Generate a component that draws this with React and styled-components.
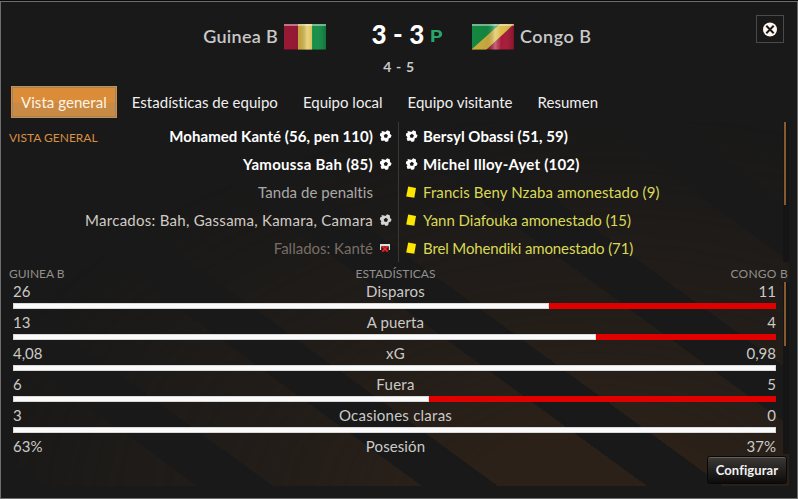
import React, { useState } from "react";
import styled, { createGlobalStyle } from "styled-components";

const GlobalStyle = createGlobalStyle`
  * {
    box-sizing: border-box;
  }

  body {
    margin: 0;
    background-color: #0b0a0b;
    font-family: Lato, "Liberation Sans", sans-serif;
  }
`;

const Window = styled.div`
  display: flex;
  flex-direction: column;
  width: 798px;
  height: 498px;
  margin-top: 1px;
  border: 1px solid #6d6d6d;
  background-color: #191919;
  overflow: hidden;
`;

const Header = styled.header`
  display: grid;
  grid-template-columns: 325px 146px 1fr 41px;
  height: 84px;
`;

const Team = styled.div`
  display: flex;
  align-items: center;
  justify-content: ${({ $home }) => ($home ? "flex-end" : "flex-start")};
  gap: 6px;
  height: 69px;
`;

const TeamName = styled.span`
  padding-bottom: 2px;
  font-size: 18px;
  font-weight: 600;
  color: #c9c9c9;
  letter-spacing: ${({ $track }) => $track}px;
  white-space: nowrap;
`;

const Flag = styled.svg`
  display: block;
  width: 42px;
  height: 26px;
`;

const ScoreWrap = styled.div`
  display: flex;
  flex-direction: column;
`;

const ScoreLine = styled.div`
  display: grid;
  grid-template-columns: 1fr auto 1fr;
  align-items: center;
  height: 54px;
  padding: 11px 2px 2px 0;
`;

const Score = styled.span`
  grid-column: 2;
  font-size: 26px;
  font-weight: 900;
  color: #fff;
  letter-spacing: 0.2px;
  white-space: nowrap;
`;

const Penalties = styled.span`
  margin-left: 5px;
  padding-top: 4px;
  font-family: Inter, sans-serif;
  font-size: 16px;
  font-weight: 700;
  color: #25a867;
  transform: scaleX(1.25);
  transform-origin: left;
`;

const SubScore = styled.span`
  margin-top: 2px;
  font-size: 14px;
  font-weight: 700;
  line-height: 18px;
  letter-spacing: 0.6px;
  color: #c9c9c9;
  text-align: center;
`;

const CloseButton = styled.button`
  display: flex;
  align-items: center;
  justify-content: center;
  width: 28px;
  height: 28px;
  margin-top: 13px;
  padding: 0;
  border: 1px solid #4a4a4a;
  background-color: transparent;
  cursor: pointer;
`;

const Tabs = styled.nav`
  display: flex;
  gap: 5px;
  height: 36px;
  padding-left: 10px;
`;

const Tab = styled.button`
  height: 32px;
  padding: 0 10px 1px;
  border: none;
  background: transparent;
  color: #efefef;
  font-family: inherit;
  font-size: 15px;
  letter-spacing: ${({ $track }) => $track}px;
  white-space: nowrap;
  cursor: pointer;

  &.active {
    background: linear-gradient(#da8c38 0 53%, #c98a45 53%);
    box-shadow: inset 0 0 0 1px #d68d3d, inset 0 0 0 2px #94866f;
    color: #fff3e4;
  }
`;

const Body = styled.main`
  position: relative;
  display: flex;
  flex-direction: column;
  width: 780px;
  height: 364px;
  margin-left: 8px;

  &::before {
    content: "";
    position: absolute;
    inset: 0;
    background: repeating-linear-gradient(
      36.1deg,
      transparent 0 22.9px,
      #2b2119 22.9px 110.7px,
      transparent 110.7px 132.6px
    );
    mask-image: radial-gradient(640px 390px at 75% 105%, #000 20%, rgba(0, 0, 0, 0.5) 55%, transparent);
  }

  > * {
    position: relative;
  }
`;

const Events = styled.section`
  display: grid;
  grid-template-columns: 110px 279px 1fr 6px;
  height: 140px;
`;

const SectionTitle = styled.h2`
  margin: 0;
  font-size: 12px;
  font-weight: 400;
  line-height: 32px;
  color: #d98f45;
  white-space: nowrap;
`;

const EventList = styled.div`
  display: flex;
  flex-direction: column;
  align-items: ${({ $home }) => ($home ? "flex-end" : "flex-start")};
  border-left: ${({ $home }) => ($home ? "none" : "1px solid #383838")};
`;

const EventRow = styled.div`
  display: flex;
  flex-direction: ${({ $home }) => ($home ? "row" : "row-reverse")};
  align-items: center;
  gap: ${({ $home }) => ($home ? 6 : 5)}px;
  height: 28px;
  padding: 0 6px;
`;

const eventColors = {
  goal: "#ffffff",
  title: "#aaa9a7",
  scored: "#d2cbc4",
  missed: "#776e67",
  card: "#d9d955",
};

const EventText = styled.span`
  padding-bottom: 1px;
  font-size: 15px;
  font-weight: ${({ $kind }) => ($kind === "goal" ? 700 : 400)};
  color: ${({ $kind }) => eventColors[$kind]};
  letter-spacing: ${({ $track }) => $track}px;
  white-space: nowrap;
`;

const EventIcon = styled.svg`
  display: block;
  flex: none;
  width: 13px;
  height: 14px;
`;

const ScrollTrack = styled.div`
  width: 6px;
  height: ${({ $height }) => $height}px;
  padding-left: 1px;
  background-color: #151515;
`;

const ScrollThumb = styled.div`
  width: 2px;
  height: ${({ $height }) => $height}px;
  background-color: #87592f;
`;

const StatsHeader = styled.div`
  display: grid;
  grid-template-columns: 1fr auto 1fr;
  align-items: center;
  height: 20px;
  padding: 3px 1px 1px 0;
  font-size: 12px;
  color: #92908b;

  span:last-child {
    letter-spacing: 0.25px;
    text-align: right;
  }
`;

const StatsTitle = styled.span`
  padding-right: 6px;
`;

const Stats = styled.section`
  display: grid;
  grid-template-columns: 1fr 6px;
  column-gap: 7px;
  padding-left: 4px;
`;

const StatRow = styled.div`
  height: 31px;
`;

const StatLine = styled.div`
  display: grid;
  grid-template-columns: 1fr auto 1fr;
  align-items: center;
  height: 21px;
  padding-bottom: 3px;
  font-size: 15px;
  color: #cbcac7;
`;

const StatLabel = styled.span`
  padding-left: 2px;
  letter-spacing: ${({ $track }) => $track}px;
`;

const StatValue = styled.span`
  text-align: ${({ $away }) => ($away ? "right" : "left")};
`;

const Bar = styled.div`
  display: flex;
  height: 6px;
  background-color: #e00000;
`;

const BarFill = styled.div`
  border: 1px solid #d9d9d9;
  background-color: #fafafa;
`;

const ConfigButton = styled.button`
  align-self: flex-end;
  width: 80px;
  height: 28px;
  margin: -12px 2px 0 0;
  padding: 0;
  border: 1px solid #080808;
  border-radius: 3px;
  background: linear-gradient(#3c3835, #211f1e 55%, #0d0c0c);
  box-shadow: inset 0 1px 0 #65615e;
  color: #f2f2f2;
  font-family: inherit;
  font-size: 13px;
  font-weight: 700;
  letter-spacing: 0.1px;
  cursor: pointer;
`;

const tabs = [
  { name: "Vista general", track: 0.05 },
  { name: "Estadísticas de equipo", track: 0.02 },
  { name: "Equipo local", track: 0 },
  { name: "Equipo visitante", track: 0 },
  { name: "Resumen", track: 0.05 },
];

const homeEvents = [
  { text: "Mohamed Kanté (56, pen 110)", kind: "goal", track: 0.05 },
  { text: "Yamoussa Bah (85)", kind: "goal", track: 0.3 },
  { text: "Tanda de penaltis", kind: "title", track: 0.06 },
  { text: "Marcados: Bah, Gassama, Kamara, Camara", kind: "scored", track: 0.27 },
  { text: "Fallados: Kanté", kind: "missed", track: 0 },
];

const awayEvents = [
  { text: "Bersyl Obassi (51, 59)", kind: "goal", track: 0.04 },
  { text: "Michel Illoy-Ayet (102)", kind: "goal", track: 0.22 },
  { text: "Francis Beny Nzaba amonestado (9)", kind: "card", track: 0.09 },
  { text: "Yann Diafouka amonestado (15)", kind: "card", track: -0.03 },
  { text: "Brel Mohendiki amonestado (71)", kind: "card", track: -0.13 },
];

const stats = [
  { label: "Disparos", home: "26", away: "11", share: 70.27, track: 0.2 },
  { label: "A puerta", home: "13", away: "4", share: 76.47, track: 0.1 },
  { label: "xG", home: "4,08", away: "0,98", share: 100, track: 0.3 },
  { label: "Fuera", home: "6", away: "5", share: 54.55, track: 0.3 },
  { label: "Ocasiones claras", home: "3", away: "0", share: 100, track: 0.25 },
  { label: "Posesión", home: "63%", away: "37%", track: 0.1 },
];

function FlagShine({ id }) {
  return (
    <>
      <defs>
        <linearGradient id={id}>
          <stop offset="0" stopColor="#000" stopOpacity="0.08" />
          <stop offset="0.35" stopColor="#000" stopOpacity="0.12" />
          <stop offset="0.55" stopColor="#fff" stopOpacity="0.35" />
          <stop offset="0.7" stopColor="#fff" stopOpacity="0.02" />
          <stop offset="1" stopColor="#000" stopOpacity="0.18" />
        </linearGradient>
      </defs>
      <rect width="42" height="26" fill={`url(#${id})`} />
      <path d="M0 1H42" stroke="#fff" strokeOpacity="0.4" strokeWidth="2" />
      <path d="M0 25.5H42" stroke="#000" strokeOpacity="0.35" />
    </>
  );
}

function GuineaFlag() {
  return (
    <Flag viewBox="0 0 42 26">
      <rect width="14" height="26" fill="#a51c3a" />
      <rect x="14" width="14" height="26" fill="#dcbc45" />
      <rect x="28" width="14" height="26" fill="#128d45" />
      <FlagShine id="guineaShine" />
    </Flag>
  );
}

function CongoFlag() {
  return (
    <Flag viewBox="0 0 42 26">
      <rect width="42" height="26" fill="#dcbc45" />
      <path d="M0 0H28L0 25Z" fill="#159447" />
      <path d="M42 0V26H14Z" fill="#a51533" />
      <FlagShine id="congoShine" />
    </Flag>
  );
}

function BallIcon({ color }) {
  return (
    <EventIcon viewBox="0 0 13 14">
      <path
        d="M2.6 2 5 2.4 6.4 3 8.2 1.3 11 2.6 10.9 4.8 12.6 6.4 11.6 8.8 9.8 9.2 9.2 12.2 6.8 12.9 5.4 11.4 2.6 12 1.6 9.6 2.5 8.2 0.9 6.6 1.2 4.2 2.7 4Z"
        fill={color}
      />
      <path d="M6.8 4.8 8.9 6.2 8.1 8.7 5.5 8.7 4.7 6.4Z" fill="#191919" />
    </EventIcon>
  );
}

function CardIcon() {
  return (
    <EventIcon viewBox="0 0 13 14">
      <path d="M3.2 1.6 11 2.9 9.3 12.8 1.2 11.4Z" fill="#ffe600" />
    </EventIcon>
  );
}

function MissIcon() {
  return (
    <EventIcon viewBox="0 0 13 14">
      <path d="M1 9V3H11V9H9.6V5.5H2.4V9Z" fill="#e2dfdc" />
      <path d="M2.4 5.5H9.6V9L8 11H4L2.4 9Z" fill="#5c0a0d" />
      <path d="M3.4 5.4 8.8 10.6M8.6 5.4 3.2 10.6" stroke="#e0282d" strokeWidth="1.6" />
    </EventIcon>
  );
}

function KindIcon({ kind }) {
  if (kind === "goal") return <BallIcon color="#ffffff" />;
  if (kind === "scored") return <BallIcon color="#d4d4d4" />;
  if (kind === "missed") return <MissIcon />;
  if (kind === "card") return <CardIcon />;
  return <EventIcon viewBox="0 0 13 14" />;
}

function EventColumn({ events, home }) {
  return (
    <EventList $home={home}>
      {events.map(({ text, kind, track }) => (
        <EventRow key={text} $home={home}>
          <EventText $kind={kind} $track={track}>
            {text}
          </EventText>
          <KindIcon kind={kind} />
        </EventRow>
      ))}
    </EventList>
  );
}

function App() {
  const [activeTab, setActiveTab] = useState("Vista general");

  return (
    <>
      <GlobalStyle />
      <Window>
        <Header>
          <Team $home>
            <TeamName $track={0.3}>Guinea B</TeamName>
            <GuineaFlag />
          </Team>
          <ScoreWrap>
            <ScoreLine>
              <Score>3 - 3</Score>
              <Penalties>P</Penalties>
            </ScoreLine>
            <SubScore>4 - 5</SubScore>
          </ScoreWrap>
          <Team>
            <CongoFlag />
            <TeamName $track={0.5}>Congo B</TeamName>
          </Team>
          <CloseButton aria-label="Cerrar">
            <svg width="16" height="16" viewBox="0 0 16 16">
              <circle cx="8" cy="8.5" r="7" fill="#fff7f0" />
              <path d="M4.3 4.8 11.7 12.2M11.7 4.8 4.3 12.2" stroke="#191919" strokeWidth="2" />
            </svg>
          </CloseButton>
        </Header>
        <Tabs>
          {tabs.map(({ name, track }) => (
            <Tab key={name} $track={track} className={activeTab === name ? "active" : ""} onClick={() => setActiveTab(name)}>
              {name}
            </Tab>
          ))}
        </Tabs>
        <Body>
          <Events>
            <SectionTitle>VISTA GENERAL</SectionTitle>
            <EventColumn events={homeEvents} home />
            <EventColumn events={awayEvents} />
            <ScrollTrack $height={140}>
              <ScrollThumb $height={83} />
            </ScrollTrack>
          </Events>
          <StatsHeader>
            <span>GUINEA B</span>
            <StatsTitle>ESTADÍSTICAS</StatsTitle>
            <span>CONGO B</span>
          </StatsHeader>
          <Stats>
            <div>
              {stats.map(({ label, home, away, share, track }) => (
                <StatRow key={label}>
                  <StatLine>
                    <StatValue>{home}</StatValue>
                    <StatLabel $track={track}>{label}</StatLabel>
                    <StatValue $away>{away}</StatValue>
                  </StatLine>
                  {share && (
                    <Bar>
                      <BarFill style={{ width: `${share}%` }} />
                    </Bar>
                  )}
                </StatRow>
              ))}
            </div>
            <ScrollTrack $height={172}>
              <ScrollThumb $height={64} />
            </ScrollTrack>
          </Stats>
          <ConfigButton>Configurar</ConfigButton>
        </Body>
      </Window>
    </>
  );
}

export default App;
